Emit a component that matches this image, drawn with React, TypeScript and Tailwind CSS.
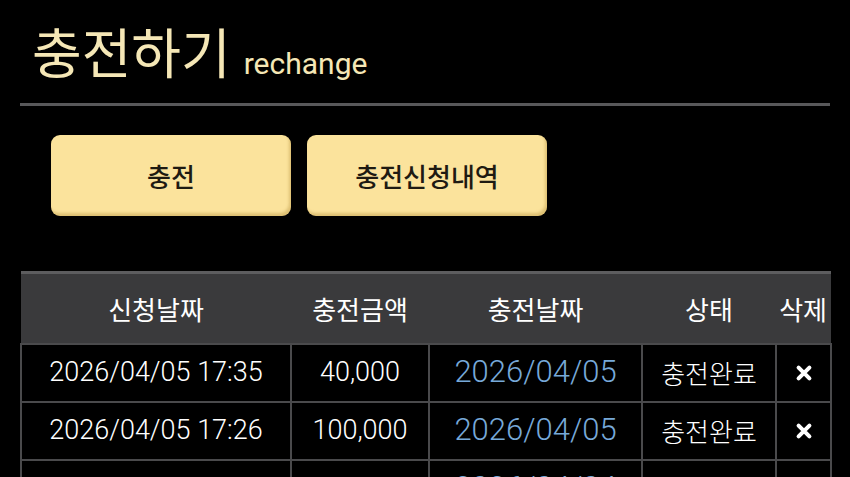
import React from 'react';

interface Row {
  requested: string;
  amount: string;
  charged: string;
  status: string;
}

const rows: Row[] = [
  { requested: '2026/04/05 17:35', amount: '40,000', charged: '2026/04/05', status: '충전완료' },
  { requested: '2026/04/05 17:26', amount: '100,000', charged: '2026/04/05', status: '충전완료' },
  { requested: '2026/04/04 21:12', amount: '50,000', charged: '2026/04/04', status: '충전완료' },
];

const font = "font-['Roboto','Noto_Sans_CJK_KR',sans-serif]";

const App = () => {
  return (
    <div className={`h-[477px] w-[850px] overflow-hidden bg-black px-[20px] ${font}`}>
      {/* title */}
      <div className="flex items-baseline gap-[13px] pl-[12px] pt-[19px] pb-[20px] text-[#f5e7b6]">
        <span className="text-[54px] leading-[64px] font-['Noto_Sans_CJK_KR',sans-serif]">충전하기</span>
        <span className="text-[30px] leading-none">rechange</span>
      </div>
      <div className="h-[3px] bg-[#58585a]" />

      {/* buttons */}
      <div className="flex gap-[16px] pl-[31px] pt-[29px]">
        {['충전', '충전신청내역'].map((label) => (
          <button
            key={label}
            className="h-[81px] w-[240px] rounded-[9px] bg-[#fbe39c] text-[26px] font-medium text-[#1e1a12] shadow-[inset_-2px_-3px_3px_rgba(170,130,40,0.35),0_1px_2px_rgba(0,0,0,0.5)] font-['Noto_Sans_CJK_KR',sans-serif]"
          >
            {label}
          </button>
        ))}
      </div>

      {/* history table */}
      <table className="mt-[55px] w-full table-fixed border-collapse text-white">
        <colgroup>
          <col className="w-[270px]" />
          <col className="w-[138px]" />
          <col className="w-[213px]" />
          <col className="w-[134px]" />
          <col className="w-[55px]" />
        </colgroup>
        <thead>
          <tr className="h-[71px] border-t-[3px] border-[#5d5d5f] bg-[#3a3a3c] text-[26px] font-['Noto_Sans_CJK_KR',sans-serif]">
            <th className="font-normal">신청날짜</th>
            <th className="font-normal">충전금액</th>
            <th className="font-normal">충전날짜</th>
            <th className="font-normal">상태</th>
            <th className="whitespace-nowrap text-right pr-[4px] font-normal">삭제</th>
          </tr>
        </thead>
        <tbody className="font-light">
          {rows.map((r, i) => (
            <tr key={i} className="h-[58px]">
              <td className="border-2 border-[#4a4a4c] text-center text-[27px]">{r.requested}</td>
              <td className="border-2 border-[#4a4a4c] text-center text-[27px]">{r.amount}</td>
              <td className="border-2 border-[#4a4a4c] text-center text-[31px] text-[#77a9d9]">{r.charged}</td>
              <td className="border-2 border-[#4a4a4c] text-center text-[26px] font-['Noto_Sans_CJK_KR',sans-serif]">{r.status}</td>
              <td className="border-2 border-[#4a4a4c] text-center">
                <svg viewBox="0 0 20 20" className="mx-auto h-[18px] w-[18px]">
                  <path d="M4 4 L16 16 M16 4 L4 16" stroke="white" strokeWidth="4.5" strokeLinecap="round" />
                </svg>
              </td>
            </tr>
          ))}
        </tbody>
      </table>
    </div>
  );
};

export default App;
